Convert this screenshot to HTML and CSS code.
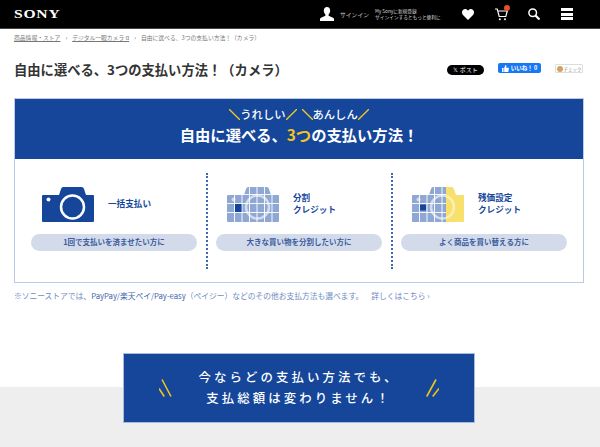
FILE: index.html
```html
<!DOCTYPE html>
<html lang="ja">
<head>
    <meta charset="utf-8">
    <title>自由に選べる、3つの支払い方法！（カメラ）</title>
    <link rel="stylesheet" href="styles.css">
</head>
<body>
<svg class="defs" width="0" height="0">
    <defs>
        <path id="cam-shape" d="M1 8h16l2-6q.5-2 2.5-2h18q2 0 2.5 2l2 6h7q1 0 1 1v25q0 1-1 1H1q-1 0-1-1V9q0-1 1-1z"/>
        <g id="cam-grid" stroke="#fff" stroke-width=".9">
            <path d="M7.500 0v35M15 0v35M22.500 0v35M30 0v35M37.500 0v35M45 0v35M0 7.500h52M0 16.500h52M0 25.500h52"/>
        </g>
        <clipPath id="cam-clip"><use href="#cam-shape"/></clipPath>
        <clipPath id="cam-left"><rect width="34" height="35"/></clipPath>
    </defs>
</svg>

<header class="top-bar">
    <div class="logo">SONY</div>
    <div class="top-right">
        <svg class="ico-user" viewBox="0 0 14 14" width="14" height="14"><path fill="#fff" d="M7 0c2 0 3.200 1.500 3.200 3.600 0 1.700-.8 3.200-1.600 3.900v1.300l4.400 1.900c.6.300 1 .7 1 1.300v2H0v-2c0-.6.400-1 1-1.300l4.400-1.900V7.500c-.8-.7-1.600-2.200-1.600-3.900C3.800 1.500 5 0 7 0z"/></svg>
        <span class="signin">サインイン</span>
        <div class="mysony">My Sonyに新規登録<br>サインインするともっと便利に</div>
        <svg class="ico-heart" viewBox="0 0 12 11" width="12" height="11"><path fill="#fff" d="M6 11L1 6C-.5 4.300-.3 1.800 1.200.7 2.800-.4 4.900 0 6 1.800 7.100 0 9.200-.4 10.800.7c1.500 1.100 1.700 3.600.2 5.300z"/></svg>
        <div class="cart">
            <svg viewBox="0 0 13 13" width="13" height="13" fill="none" stroke="#fff" stroke-width="1.200"><path d="M0 1h2.200l2 7.500h6.600L12.300 3H3"/><circle cx="4.800" cy="11.200" r="1" fill="#fff" stroke="none"/><circle cx="10" cy="11.200" r="1" fill="#fff" stroke="none"/></svg>
            <span class="badge"></span>
        </div>
        <svg class="ico-search" viewBox="0 0 12 12" width="12" height="12" fill="none" stroke="#fff"><circle cx="4.700" cy="4.700" r="3.800" stroke-width="1.500"/><path d="M7.500 7.500l4 4" stroke-width="2.200"/></svg>
        <div class="menu"><span></span><span></span><span></span></div>
    </div>
</header>

<nav class="crumbs">
    <a>商品情報・ストア</a><i>›</i><a>デジタル一眼カメラ α</a><i>›</i><span>自由に選べる、3つの支払い方法！（カメラ）</span>
</nav>

<div class="title-row">
    <h1>自由に選べる、3つの支払い方法！（カメラ）</h1>
    <div class="social">
        <span class="btn-x">𝕏 ポスト</span>
        <span class="btn-fb">
            <svg viewBox="0 0 8 8" width="7" height="7"><path fill="#fff" d="M0 3.500h1.800V8H0zM2.500 3.500L4 0c.9 0 1.200.7 1 1.500L4.800 3H8l-.8 5H2.500z"/></svg>
            いいね！ 0
        </span>
        <span class="btn-check"><b></b>チェック</span>
    </div>
</div>

<section class="panel">
    <div class="panel-head">
        <div class="catch">
            <svg class="tick" viewBox="0 0 11 11" width="11" height="11"><path d="M0 0l11 11"/></svg>
            <span>うれしい</span>
            <svg class="tick" viewBox="0 0 11 11" width="11" height="11"><path d="M11 0L0 11"/></svg>
            <svg class="tick gap" viewBox="0 0 11 11" width="11" height="11"><path d="M0 0l11 11"/></svg>
            <span>あんしん</span>
            <svg class="tick" viewBox="0 0 11 11" width="11" height="11"><path d="M11 0L0 11"/></svg>
        </div>
        <h2>自由に選べる、<em>3つ</em>の支払い方法！</h2>
    </div>
    <div class="plans">
        <div class="plan">
            <div class="plan-top">
                <svg class="cam" viewBox="0 0 52 35" width="52" height="35">
                    <use href="#cam-shape" fill="#15469a"/>
                    <circle cx="30.500" cy="20" r="11.500" fill="none" stroke="#fff" stroke-width="2.500"/>
                    <circle cx="6.500" cy="12.500" r="2" fill="#fff"/>
                </svg>
                <div class="plan-name">一括支払い</div>
            </div>
            <div class="pill">1回で支払いを済ませたい方に</div>
        </div>
        <div class="plan">
            <div class="plan-top">
                <svg class="cam" viewBox="0 0 52 35" width="52" height="35">
                    <use href="#cam-shape" fill="#8fa8d3"/>
                    <circle cx="30.500" cy="20" r="11.500" fill="none" stroke="#d3dcec" stroke-width="2.500"/>
                    <circle cx="6.500" cy="12.500" r="2" fill="#d3dcec"/>
                    <g clip-path="url(#cam-clip)"><use href="#cam-grid"/></g>
                    <rect x="8" y="17" width="6.500" height="8" fill="#15469a"/>
                </svg>
                <div class="plan-name">分割<br>クレジット</div>
            </div>
            <div class="pill">大きな買い物を分割したい方に</div>
        </div>
        <div class="plan">
            <div class="plan-top">
                <svg class="cam" viewBox="0 0 52 35" width="52" height="35">
                    <use href="#cam-shape" fill="#f8e06c"/>
                    <circle cx="30.500" cy="20" r="11.500" fill="none" stroke="#fbf0b4" stroke-width="2.500"/>
                    <g clip-path="url(#cam-left)">
                        <use href="#cam-shape" fill="#8fa8d3"/>
                        <circle cx="30.500" cy="20" r="11.500" fill="none" stroke="#d3dcec" stroke-width="2.500"/>
                        <circle cx="6.500" cy="12.500" r="2" fill="#d3dcec"/>
                        <g clip-path="url(#cam-clip)"><use href="#cam-grid"/></g>
                    </g>
                    <rect x="8" y="17.500" width="6" height="6" fill="#15469a"/>
                </svg>
                <div class="plan-name">残価設定<br>クレジット</div>
            </div>
            <div class="pill">よく商品を買い替える方に</div>
        </div>
    </div>
</section>

<p class="note">※ソニーストアでは、<span>PayPay/楽天ペイ/Pay-easy</span>（ペイジー）などのその他お支払方法も選べます。<a>詳しくはこちら ›</a></p>

<div class="lower">
    <div class="notice">
        <svg class="spark" viewBox="0 0 13 19" width="13" height="19"><path d="M3 .5l9 17M0 9.500l5.300 8"/></svg>
        <p>今ならどの支払い方法でも、<br>支払総額は変わりません！</p>
        <svg class="spark" viewBox="0 0 13 19" width="13" height="19"><path d="M10 .5L.7 17.500M13 9.500l-6.300 8"/></svg>
    </div>
</div>
</body>
</html>
```

FILE: styles.css
```css
* {
    box-sizing: border-box;
}

html, body {
    height: 447px;
    overflow: hidden;
}

body {
    margin: 0;
    background-color: #fff;
    color: #333;
    font-family: "Noto Sans CJK JP", "Noto Sans", sans-serif;
}

.defs {
    display: block;
    height: 0;
}

.top-bar {
    height: 29px;
    background-color: #000;
    border-bottom: 1px solid #444;
    display: flex;
    align-items: center;
    justify-content: space-between;
    padding: 0 27px 0 14px;
}

.logo {
    color: #fff;
    font-family: "Liberation Serif", serif;
    font-weight: bold;
    font-size: 12px;
    letter-spacing: 0.6px;
    transform: scaleX(1.3);
    transform-origin: left;
}

.top-right {
    display: flex;
    align-items: center;
}

.signin {
    color: #ccc;
    font-size: 5.800px;
    margin-left: 6px;
    width: 35px;
}

.mysony {
    color: #ddd;
    font-size: 4.700px;
    line-height: 6px;
    width: 87px;
}

.cart {
    position: relative;
    display: flex;
    height: 13px;
    margin-left: 21px;
}

.badge {
    position: absolute;
    top: -3px;
    right: -2px;
    width: 6px;
    height: 6px;
    border-radius: 50%;
    background-color: #e5502a;
}

.ico-search {
    margin-left: 20px;
}

.menu {
    width: 12px;
    margin-left: 21px;
    display: flex;
    flex-direction: column;
    gap: 1.500px;
}

.menu span {
    height: 3px;
    background-color: #fff;
}

.crumbs {
    display: flex;
    align-items: center;
    height: 16px;
    padding: 0 14px;
    font-size: 5.800px;
    color: #777;
}

.crumbs a {
    text-decoration: underline;
}

.crumbs i {
    font-style: normal;
    margin: 0 5px;
}

.title-row {
    display: flex;
    align-items: center;
    justify-content: space-between;
    height: 21px;
    margin-top: 14px;
    padding: 0 17px 0 14px;
}

h1 {
    margin: 0;
    font-size: 13.300px;
    font-weight: bold;
    color: #333;
}

.social {
    display: flex;
    align-items: center;
    margin-top: 1px;
}

.btn-x {
    width: 37px;
    height: 10px;
    border-radius: 5px;
    background-color: #000;
    color: #fff;
    font-size: 6px;
    line-height: 10px;
    text-align: center;
}

.btn-fb {
    width: 43px;
    height: 10px;
    margin-left: 14px;
    margin-top: -4px;
    border-radius: 2px;
    background-color: #1877f2;
    color: #fff;
    font-size: 5.500px;
    font-weight: bold;
    display: flex;
    align-items: center;
    justify-content: center;
    gap: 2px;
}

.btn-check {
    width: 28px;
    height: 9px;
    margin-left: 14px;
    margin-top: -3px;
    border: 1px solid #ddd;
    border-radius: 1px;
    color: #888;
    font-size: 4.500px;
    display: flex;
    align-items: center;
    justify-content: center;
    gap: 1px;
}

.btn-check b {
    width: 6px;
    height: 6px;
    border-radius: 50%;
    background-color: #d2a360;
}

.panel {
    width: 570px;
    height: 185px;
    margin: 18px 0 0 14px;
    border: 1px solid #bccae4;
}

.panel-head {
    height: 60px;
    background-color: #15469a;
    color: #fff;
    text-align: center;
    padding-top: 6px;
}

.catch {
    display: flex;
    justify-content: center;
    align-items: center;
    height: 18px;
    font-size: 11.300px;
    font-weight: 500;
}

.tick {
    fill: none;
    stroke: #f0cb20;
    stroke-width: 1.300;
    flex: none;
}

.tick.gap {
    margin-left: 5px;
}

h2 {
    margin: 0;
    font-size: 15.300px;
    line-height: 22px;
    font-weight: bold;
}

h2 em {
    font-style: normal;
    color: #f5c51c;
}

.plans {
    display: flex;
    padding-top: 14px;
}

.plan {
    width: 185px;
    height: 96px;
    padding: 14px 0 0 8px;
    border-right: 2px dotted #3f68ad;
}

.plan:first-child {
    width: 193px;
    padding-left: 16px;
}

.plan:last-child {
    border-right: 0;
}

.plan-top {
    display: flex;
    align-items: center;
    height: 35px;
    padding-left: 11px;
    gap: 14px;
}

.plan-name {
    color: #15469a;
    font-size: 8.600px;
    font-weight: bold;
    line-height: 12px;
    margin-top: -3px;
}

.pill {
    width: 166px;
    height: 17px;
    margin-top: 12px;
    border-radius: 9px;
    background-color: #d3dbea;
    color: #3a5c9e;
    font-size: 7.500px;
    font-weight: bold;
    line-height: 16px;
    text-align: center;
}

.note {
    margin: 7px 0 0 14px;
    font-size: 7.750px;
    line-height: 12px;
    color: #6d8dbf;
}

.note span {
    color: #3f68ad;
}

.note a {
    margin-left: 8px;
    color: #6d86c4;
}

.lower {
    margin-top: 51px;
    height: 100px;
    background: linear-gradient(#fff 34px, #eee 34px);
}

.notice {
    width: 352px;
    height: 70px;
    margin-left: 123px;
    border: 1px solid #a9bbdc;
    background-color: #15469a;
    color: #fff;
    display: flex;
    align-items: center;
    justify-content: space-between;
    padding: 0 35px;
}

.notice p {
    margin: 0;
    font-size: 12.400px;
    line-height: 21px;
    font-weight: 500;
    letter-spacing: 3.100px;
    text-align: center;
}

.spark {
    fill: none;
    stroke: #f0c419;
    stroke-width: 1.600;
}
```
